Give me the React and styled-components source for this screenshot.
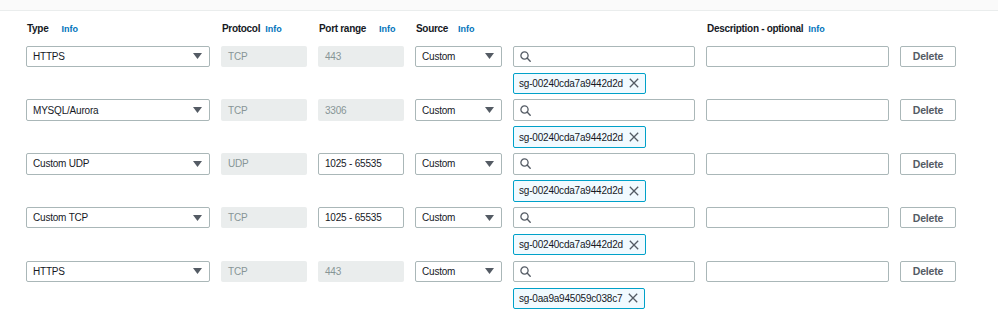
import React from "react";
import styled, { createGlobalStyle } from "styled-components";

const GlobalStyle = createGlobalStyle`
  body {
    margin: 0;
    background: #ffffff;
    font-family: "Liberation Sans", Arial, sans-serif;
    color: #16191f;
  }
`;

const rules = [
  { type: "HTTPS", protocol: "TCP", port: "443", portLocked: true, sg: "sg-00240cda7a9442d2d" },
  { type: "MYSQL/Aurora", protocol: "TCP", port: "3306", portLocked: true, sg: "sg-00240cda7a9442d2d" },
  { type: "Custom UDP", protocol: "UDP", port: "1025 - 65535", portLocked: false, sg: "sg-00240cda7a9442d2d" },
  { type: "Custom TCP", protocol: "TCP", port: "1025 - 65535", portLocked: false, sg: "sg-00240cda7a9442d2d" },
  { type: "HTTPS", protocol: "TCP", port: "443", portLocked: true, sg: "sg-0aa9a945059c038c7" },
];

function App() {
  return (
    <>
      <GlobalStyle />
      <TopBand />
      <Table>
        <HeaderRow>
          <Label>
            Type<Info>Info</Info>
          </Label>
          <Label>
            Protocol<Info $gap={5}>Info</Info>
          </Label>
          <Label>
            Port range<Info>Info</Info>
          </Label>
          <Label>
            Source<Info $gap={10}>Info</Info>
          </Label>
          <span />
          <Label>
            Description - optional<Info $gap={5}>Info</Info>
          </Label>
          <span />
        </HeaderRow>

        {rules.map((rule, i) => (
          <RuleRow key={i}>
            <Select>
              {rule.type}
              <Caret />
            </Select>
            <Locked>{rule.protocol}</Locked>
            {rule.portLocked ? (
              <Locked>{rule.port}</Locked>
            ) : (
              <Field>{rule.port}</Field>
            )}
            <Select>
              Custom
              <Caret />
            </Select>
            <SourceStack>
              <Field>
                <SearchIcon />
              </Field>
              <Token>
                {rule.sg}
                <CloseIcon />
              </Token>
            </SourceStack>
            <Field />
            <Button>Delete</Button>
          </RuleRow>
        ))}
      </Table>
    </>
  );
}

export default App;

const Caret = () => (
  <svg width="9" height="6" viewBox="0 0 9 6" style={{ marginLeft: "auto" }}>
    <path d="M0 0 H9 L4.5 6 Z" fill="#545b64" />
  </svg>
);

const SearchIcon = () => (
  <svg width="11" height="11" viewBox="0 0 11 11">
    <circle cx="4.5" cy="4.5" r="3.6" fill="none" stroke="#545b64" strokeWidth="1.3" />
    <path d="M7.1 7.1 L10.2 10.2" stroke="#545b64" strokeWidth="1.4" strokeLinecap="round" />
  </svg>
);

const CloseIcon = () => (
  <svg width="10" height="10" viewBox="0 0 10 10" style={{ marginLeft: 6 }}>
    <path d="M0.8 0.8 L9.2 9.2 M9.2 0.8 L0.8 9.2" stroke="#545b64" strokeWidth="1.3" />
  </svg>
);

const TopBand = styled.div`
  height: 10px;
  background: #fafafa;
  border-bottom: 1px solid #eaeded;
`;

const Table = styled.div`
  padding: 11px 0 0 26px;
`;

const columns = "184px 86px 86px 87px 182px 183px 56px";

const HeaderRow = styled.div`
  display: grid;
  grid-template-columns: ${columns};
  column-gap: 11px;
  height: 14px;
  margin-bottom: 9.5px;
`;

const Label = styled.div`
  display: flex;
  align-items: center;
  font-size: 10px;
  letter-spacing: -0.3px;
  font-weight: bold;
  line-height: 14px;
  white-space: nowrap;
  padding-left: 1px;
`;

const Info = styled.span`
  margin-left: ${(p) => p.$gap ?? 13}px;
  font-size: 9px;
  letter-spacing: 0;
  font-weight: bold;
  color: #0073bb;
`;

const RuleRow = styled.div`
  display: grid;
  grid-template-columns: ${columns};
  column-gap: 11px;
  align-items: start;
  margin-bottom: 5.3px;
`;

const boxBase = `
  box-sizing: border-box;
  height: 21.5px;
  display: flex;
  align-items: center;
  font-size: 10px;
  letter-spacing: -0.2px;
  border-radius: 2px;
  white-space: nowrap;
`;

const Select = styled.div`
  ${boxBase}
  border: 1px solid #aab7b8;
  padding: 0 7px 0 6px;
  background: #ffffff;
  color: #16191f;
`;

const Field = styled.div`
  ${boxBase}
  border: 1px solid #aab7b8;
  padding: 0 6px;
  background: #ffffff;
  color: #16191f;
`;

const Locked = styled.div`
  ${boxBase}
  padding: 0 7px;
  background: #eaeded;
  color: #879596;
`;

const SourceStack = styled.div`
  display: flex;
  flex-direction: column;
  align-items: stretch;
  gap: 5.5px;
`;

const Token = styled.div`
  ${boxBase}
  align-self: flex-start;
  border: 1px solid #00a1c9;
  background: #f1faff;
  padding: 0 6px 0 5px;
  color: #16191f;
`;

const Button = styled.button`
  ${boxBase}
  justify-content: center;
  border: 1px solid #aab7b8;
  background: #ffffff;
  color: #545b64;
  font-family: inherit;
  font-weight: bold;
  font-size: 10.5px;
  padding: 0;
`;
